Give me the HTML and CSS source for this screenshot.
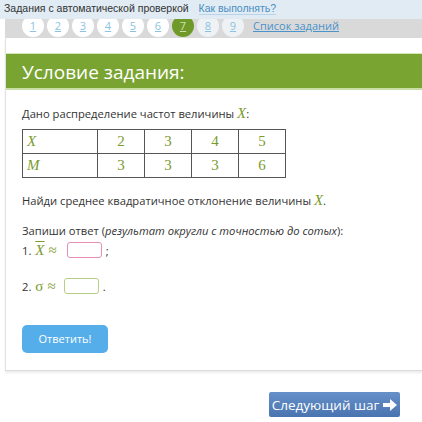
FILE: index.html
```html
<!DOCTYPE html>
<html lang="ru">
<head>
    <meta charset="UTF-8">
    <title>Условие задания</title>
    <link rel="stylesheet" href="styles.css">
</head>
<body>
    <div class="top-bar">
        <span>Задания с автоматической проверкой</span>
        <a href="#" class="how-link">Как выполнять?</a>
    </div>

    <div class="steps">
        <span class="step">1</span>
        <span class="step">2</span>
        <span class="step">3</span>
        <span class="step">4</span>
        <span class="step">5</span>
        <span class="step">6</span>
        <span class="step current">7</span>
        <span class="step">8</span>
        <span class="step">9</span>
        <a href="#" class="steps-link">Список заданий</a>
    </div>

    <div class="task-card">
        <h2 class="task-title">Условие задания:</h2>
        <div class="task-body">
            <p>Дано распределение частот величины <i class="math">X</i>:</p>
            <table class="freq-table">
                <tr>
                    <td class="head"><i>X</i></td>
                    <td>2</td><td>3</td><td>4</td><td>5</td>
                </tr>
                <tr>
                    <td class="head"><i>M</i></td>
                    <td>3</td><td>3</td><td>3</td><td>6</td>
                </tr>
            </table>
            <p class="question">Найди среднее квадратичное отклонение величины <i class="math">X</i>.</p>
            <p class="answer-note">Запиши ответ (<i>результат округли с точностью до сотых</i>):</p>
            <div class="answer-row">1. <i class="math overline">X</i> <span class="math">≈</span> <span class="answer-box pink"></span> ;</div>
            <div class="answer-row second">2. <span class="math">σ</span> <span class="math">≈</span> <span class="answer-box"></span> .</div>
            <a href="#" class="submit-button">Ответить!</a>
        </div>
    </div>

    <div class="footer">
        <a href="#" class="next-button">Следующий шаг
            <svg class="arrow" width="14" height="12" viewBox="0 0 14 12">
                <path d="M0 4 H7 V0 L14 6 L7 12 V8 H0 Z" fill="#fff"/>
            </svg>
        </a>
    </div>
</body>
</html>
```

FILE: styles.css
```css
body {
    margin: 0;
    padding: 0;
    font-family: 'Open Sans', sans-serif;
    color: #333;
    background-color: #fff;
    position: relative;
}

.top-bar {
    position: absolute;
    top: 0;
    left: 0;
    right: 0;
    height: 19px;
    padding-left: 4px;
    background-color: #e0ebf4;
    font-family: 'Liberation Sans', sans-serif;
    font-size: 10.5px;
    line-height: 17px;
    color: #333;
    z-index: 2;
}

.how-link {
    margin-left: 7px;
    color: #4a8ec3;
    text-decoration: none;
    border-bottom: 1px solid #b9d3e8;
}

.steps {
    margin-left: 5px;
    height: 38px;
    background-color: #d9d9d9;
    display: flex;
    align-items: flex-end;
    padding-left: 17px;
    box-sizing: border-box;
    padding-bottom: 1px;
}

.step {
    width: 22px;
    height: 22px;
    margin-right: 3px;
    border-radius: 50%;
    background-color: #fff;
    color: #8cc3e4;
    font-size: 11px;
    line-height: 22px;
    text-align: center;
    text-decoration: underline;
}

.step.current {
    background-color: #6f9a2a;
    color: #cfe0b0;
}

.step:nth-child(8),
.step:nth-child(9) {
    background-color: #eef2f4;
}

.steps-link {
    margin-left: 6px;
    margin-bottom: 4px;
    font-size: 11px;
    color: #4a93cb;
}

.task-card {
    margin-left: 5px;
    border-left: 1px solid #e2e2e2;
    border-bottom: 1px solid #dcdcdc;
    box-shadow: 0 2px 2px rgba(0, 0, 0, 0.08);
    padding-top: 15px;
    padding-bottom: 17px;
}

.task-title {
    margin: 0;
    height: 34px;
    padding-left: 16px;
    background-color: #7aa432;
    border-top: 1px solid #d5e6b8;
    border-bottom: 2px solid #c9dea5;
    color: #fff;
    font-weight: normal;
    font-size: 19px;
    line-height: 36px;
}

.task-body {
    padding: 15px 16px 0 16px;
    font-size: 11.2px;
}

.task-body p {
    margin: 0;
}

.math {
    font-family: 'Liberation Serif', serif;
    color: #7c9b2e;
    font-size: 15px;
}

.overline {
    text-decoration: overline;
}

.freq-table {
    margin-top: 7px;
    border-collapse: collapse;
    font-family: 'Liberation Serif', serif;
    font-size: 15px;
    color: #7c9b2e;
}

.freq-table td {
    border: 1px solid #555;
    width: 46px;
    height: 23px;
    padding: 0;
    text-align: center;
}

.freq-table td.head {
    width: 70px;
    padding-left: 4px;
    text-align: left;
}

.question {
    margin-top: 14px !important;
}

.answer-note {
    margin-top: 14px !important;
}

.answer-row {
    margin-top: 3px;
    display: flex;
    align-items: center;
    gap: 4px;
    height: 18px;
}

.answer-row.second {
    margin-top: 18px;
}

.answer-box {
    display: inline-block;
    width: 33px;
    height: 14px;
    border: 1px solid #b7cf85;
    border-radius: 3px;
    margin-left: 4px;
}

.answer-box.pink {
    border-color: #e58fb6;
    margin-left: 6px;
}

.submit-button {
    display: inline-block;
    margin-top: 30px;
    width: 86px;
    height: 28px;
    line-height: 28px;
    text-align: center;
    border-radius: 5px;
    background-color: #55aeea;
    color: #fff;
    font-size: 11px;
    text-decoration: none;
}

.footer {
    display: flex;
    justify-content: flex-end;
    padding: 21px 22px 0 0;
}

.next-button {
    display: inline-flex;
    align-items: center;
    justify-content: center;
    gap: 4px;
    width: 131px;
    height: 25px;
    border-radius: 2px;
    background: linear-gradient(#6690c8, #4a74b0);
    color: #fff;
    font-size: 13.5px;
    text-decoration: none;
}
```
